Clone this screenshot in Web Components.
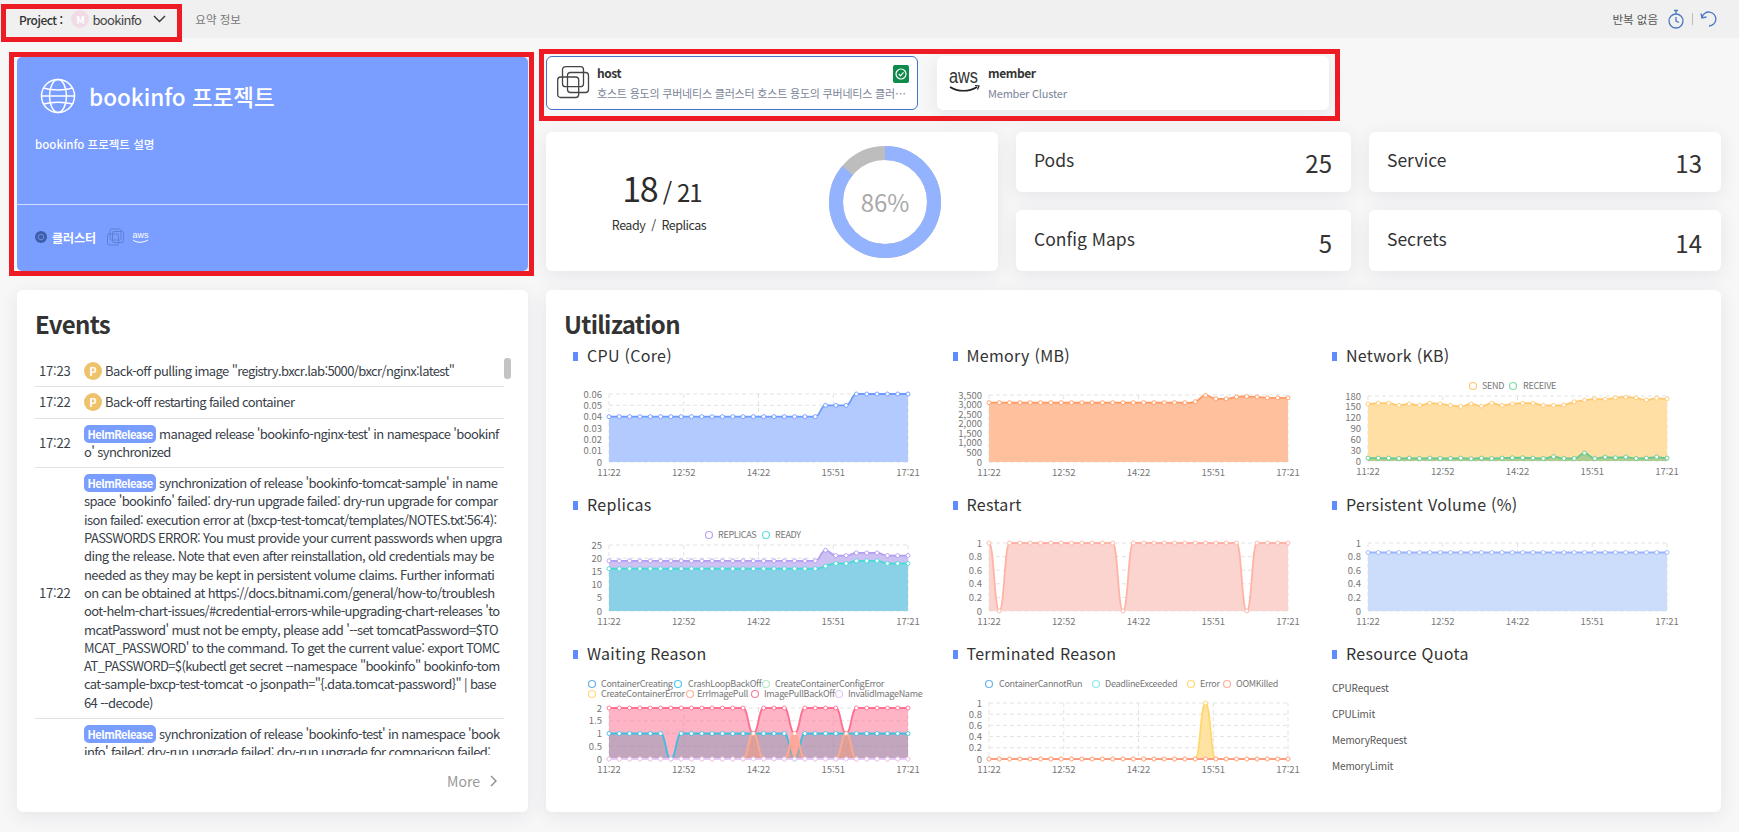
<!DOCTYPE html>
<html lang="ko">
<head>
<meta charset="utf-8">
<title>bookinfo</title>
<style>
    html, body { margin: 0; height: 832px; overflow: hidden; }
    body {
        position: relative;
        background: #f7f7f8;
        color: #333;
        font-family: "Noto Sans CJK KR", "Noto Sans", sans-serif;
    }
    main {
        display: grid;
        grid-template-columns: 511px 1175px;
        grid-template-rows: 216px 522px;
        gap: 18px;
        padding: 18px 18px 0 17px;
    }
    .right-top { display: flex; flex-direction: column; gap: 22px; }
    .clusters { display: flex; gap: 19px; }
    .stats {
        display: grid;
        grid-template-columns: 452px 335px 352px;
        grid-template-rows: 60px 61px;
        gap: 18px;
    }
    replica-card { grid-row: 1 / 3; }
</style>
</head>
<body>
<app-topbar></app-topbar>
<main>
    <project-hero name="bookinfo 프로젝트" desc="bookinfo 프로젝트 설명"></project-hero>
    <div class="right-top">
        <div class="clusters">
            <cluster-card style="width:372px" icon="stack" name="host" selected
                desc="호스트 용도의 쿠버네티스 클러스터 호스트 용도의 쿠버네티스 클러스터 호스트 용도의"></cluster-card>
            <cluster-card style="width:392px" icon="aws" name="member" desc="Member Cluster"></cluster-card>
        </div>
        <div class="stats">
            <replica-card ready="18" total="21" percent="86"></replica-card>
            <stat-card value="25">Pods</stat-card>
            <stat-card value="13">Service</stat-card>
            <stat-card value="5" low>Config Maps</stat-card>
            <stat-card value="14" low>Secrets</stat-card>
        </div>
    </div>
    <events-panel>
        <event-row time="17:23"><event-badge kind="p">P</event-badge> Back-off pulling image "registry.bxcr.lab:5000/bxcr/nginx:latest"</event-row>
        <event-row time="17:22"><event-badge kind="p">P</event-badge> Back-off restarting failed container</event-row>
        <event-row time="17:22"><event-badge kind="helm">HelmRelease</event-badge> managed release 'bookinfo-nginx-test' in namespace 'bookinf<br>o' synchronized</event-row>
        <event-row time="17:22"><event-badge kind="helm">HelmRelease</event-badge> synchronization of release 'bookinfo-tomcat-sample' in name<br>space 'bookinfo' failed: dry-run upgrade failed: dry-run upgrade for compar<br>ison failed: execution error at (bxcp-test-tomcat/templates/NOTES.txt:56:4):<br>PASSWORDS ERROR: You must provide your current passwords when upgra<br>ding the release. Note that even after reinstallation, old credentials may be<br>needed as they may be kept in persistent volume claims. Further informati<br>on can be obtained at https://docs.bitnami.com/general/how-to/troublesh<br>oot-helm-chart-issues/#credential-errors-while-upgrading-chart-releases 'to<br>mcatPassword' must not be empty, please add '--set tomcatPassword=$TO<br>MCAT_PASSWORD' to the command. To get the current value: export TOMC<br>AT_PASSWORD=$(kubectl get secret --namespace "bookinfo" bookinfo-tom<br>cat-sample-bxcp-test-tomcat -o jsonpath="{.data.tomcat-password}" | base<br>64 --decode)</event-row>
        <event-row time="17:22"><event-badge kind="helm">HelmRelease</event-badge> synchronization of release 'bookinfo-test' in namespace 'book<br>info' failed: dry-run upgrade failed: dry-run upgrade for comparison failed:<br>execution error at (bxcp-test/templates/NOTES.txt:56:4): PASSWORDS ERROR:<br>You must provide your current passwords when upgrading the release. Note<br>that even after reinstallation, old credentials may be needed as they may be<br>kept in persistent volume claims.</event-row>
    </events-panel>
    <utilization-panel>
        <metric-chart chart="cpu" heading="CPU (Core)"></metric-chart>
        <metric-chart chart="memory" heading="Memory (MB)"></metric-chart>
        <metric-chart chart="network" heading="Network (KB)"></metric-chart>
        <metric-chart chart="replicas" heading="Replicas"></metric-chart>
        <metric-chart chart="restart" heading="Restart"></metric-chart>
        <metric-chart chart="volume" heading="Persistent Volume (%)"></metric-chart>
        <metric-chart chart="waiting" heading="Waiting Reason"></metric-chart>
        <metric-chart chart="terminated" heading="Terminated Reason"></metric-chart>
        <quota-list heading="Resource Quota" items="CPURequest,CPULimit,MemoryRequest,MemoryLimit"></quota-list>
    </utilization-panel>
</main>
<mark-box style="left:1px;top:4px;width:181px;height:38px"></mark-box>
<mark-box style="left:9px;top:52px;width:525px;height:224px"></mark-box>
<mark-box style="left:539px;top:49px;width:801px;height:72px"></mark-box>

<script>
const CARD_CSS = `
    background: #fff;
    border-radius: 6px;
    box-shadow: 0 4px 18px rgba(40, 50, 70, .09);
`;

// simple base class, every element renders its markup once
class ShadowEl extends HTMLElement {
    constructor() {
        super();
        this.attachShadow({ mode: 'open' });
    }
    connectedCallback() {
        this.shadowRoot.innerHTML = this.template();
    }
}

class MarkBox extends ShadowEl {
    template() {
        return `<style>
            :host { display: block; position: absolute; box-sizing: border-box; border: 5px solid #ed1c24; pointer-events: none; }
        </style>`;
    }
}

class AppTopbar extends ShadowEl {
    template() {
        return `<style>
            :host { display: flex; align-items: center; height: 38px; background: #f0f0f0; padding: 0 21px 0 19px; font-size: 12px; }
            .label { font-weight: 500; color: #333; margin-right: 9px; letter-spacing: -.5px; white-space: nowrap; }
            .avatar { width: 18px; height: 18px; border-radius: 50%; background: #f0dbe6; color: #fff; font-weight: 700; font-size: 10px;
                display: flex; align-items: center; justify-content: center; margin-right: 3px; }
            .name { font-size: 13px; color: #444; letter-spacing: -.7px; }
            .chev { margin-left: 12px; }
            .sep { width: 1px; height: 12px; background: #ccc; margin: 0 14px 0 14px; }
            .tab { color: #777; font-size: 11.500px; }
            .grow { flex: 1; }
            .repeat { color: #555; font-size: 11.500px; margin-right: 10px; }
            .sep2 { width: 1px; height: 12px; background: #bbb; margin: 0 7px 0 8px; }
            svg { display: block; }
        </style>
        <span class="label">Project :</span>
        <span class="avatar">M</span>
        <span class="name">bookinfo</span>
        <svg class="chev" width="13" height="8" viewBox="0 0 13 8" fill="none" stroke="#333" stroke-width="1.4"><path d="M1 1l5.5 5.5L12 1"/></svg>
        <span class="sep"></span>
        <span class="tab">요약 정보</span>
        <span class="grow"></span>
        <span class="repeat">반복 없음</span>
        <svg width="16" height="20" viewBox="0 0 16 20" fill="none" stroke="#4a78c2" stroke-width="1.3">
            <circle cx="8" cy="12" r="7"/><path d="M6 1.5h4M8 2v3M8 8v4l3 1.5"/>
        </svg>
        <span class="sep2"></span>
        <svg width="18" height="16" viewBox="0 0 18 16" fill="none" stroke="#4a78c2" stroke-width="1.3">
            <path d="M2 6.5A7 7 0 1 1 9 15"/><path d="M1 2.5l1 4.5 4.500-1"/>
        </svg>`;
    }
}

class ProjectHero extends ShadowEl {
    template() {
        return `<style>
            :host { display: flex; flex-direction: column; box-sizing: border-box; height: 214px; margin-top: 1px; background: #7a9eff;
                border-radius: 5px; color: #fff; }
            .top { height: 148px; box-sizing: border-box; border-bottom: 1px solid rgba(255,255,255,.65); padding: 21px 18px 0; }
            .title { display: flex; align-items: center; gap: 13px; margin-left: 5px; }
            h1 { margin: 0; font-size: 22.500px; font-weight: 500; line-height: 36px; }
            p { margin: 21px 0 0; font-size: 11.500px; font-weight: 500; line-height: 18px; }
            .bottom { display: flex; align-items: center; padding: 23px 18px 0; }
            .bottom b { font-size: 12px; font-weight: 700; margin: 0 11px 0 5px; }
            svg { display: block; flex: none; }
        </style>
        <div class="top">
            <div class="title">
                <svg width="36" height="36" viewBox="0 0 36 36" fill="none" stroke="#fff" stroke-width="1.5">
                    <circle cx="18" cy="18" r="16.500"/><ellipse cx="18" cy="18" rx="8.500" ry="16.500"/>
                    <path d="M3.500 10c8 2.500 21 2.500 29 0M3.500 26c8-2.500 21-2.500 29 0M1.500 18h33"/>
                </svg>
                <h1>${this.getAttribute('name')}</h1>
            </div>
            <p>${this.getAttribute('desc')}</p>
        </div>
        <div class="bottom">
            <svg width="12" height="12" viewBox="0 0 12 12"><circle cx="6" cy="6" r="6" fill="#3d5fa6"/><circle cx="6" cy="6" r="2.800" fill="none" stroke="#6d8fe6" stroke-width="1"/></svg>
            <b>클러스터</b>
            <svg width="17" height="18" viewBox="0 0 17 18" fill="none" stroke="#5f80d6" stroke-width="1">
                <rect x="3" y="1" width="11" height="11" rx="1.500"/><rect x="5.500" y="3.500" width="11" height="11" rx="1.500"/><rect x=".5" y="6" width="11" height="11" rx="1.500"/>
            </svg>
            <svg style="margin-left:8px" width="17" height="14" viewBox="0 0 17 14" fill="none">
                <text x="8.500" y="8" text-anchor="middle" font-size="9" fill="#fff" font-family="Liberation Sans, sans-serif">aws</text>
                <path d="M1 10c4 3 10 3 15 0" stroke="#fff" stroke-width="1"/>
            </svg>
        </div>`;
    }
}

class ClusterCard extends ShadowEl {
    template() {
        const selected = this.hasAttribute('selected');
        const icon = this.getAttribute('icon') === 'stack' ? `
            <svg width="33" height="33" viewBox="0 0 33 33" fill="none" stroke="#444" stroke-width="1.300">
                <rect x="5.500" y=".7" width="21" height="20" rx="3"/><rect x="10.500" y="6.500" width="21" height="20" rx="3"/><rect x=".7" y="11" width="21" height="20.500" rx="3"/>
            </svg>` : `
            <svg width="33" height="33" viewBox="0 0 33 33" fill="none">
                <text x="1" y="18" font-size="20" fill="#333" font-family="Liberation Sans, sans-serif" textLength="29" lengthAdjust="spacingAndGlyphs">aws</text>
                <path d="M2 22c8 5 19 5 27 0" stroke="#222" stroke-width="1.600"/><path d="M27 20.500l4 .500-1.500 3.500" stroke="#222" stroke-width="1.200"/>
            </svg>`;
        return `<style>
            :host { display: flex; box-sizing: border-box; height: 54px; position: relative; ${CARD_CSS}
                padding: 9px 9px 0 ${selected ? 10 : 11}px; gap: 7px; ${selected ? 'border: 1px solid #4472c4; box-shadow: none;' : ''} }
            svg { flex: none; }
            .text { min-width: 0; flex: 1; margin-top: ${selected ? -1 : 0}px; }
            .name { font-size: 12px; font-weight: 700; color: #333; line-height: 16px; letter-spacing: -.4px; }
            .desc { font-size: 11px; letter-spacing: -.2px; color: #7b8598; line-height: 16px; margin-top: 4px; white-space: nowrap; overflow: hidden; text-overflow: ellipsis; }
            .check { position: absolute; top: 8px; right: 8px; }
        </style>
        ${icon}
        <div class="text">
            <div class="name">${this.getAttribute('name')}</div>
            <div class="desc">${this.getAttribute('desc')}</div>
        </div>
        ${selected ? `<svg class="check" width="16" height="18" viewBox="0 0 16 18">
            <rect width="16" height="18" rx="2" fill="#0e8a4a"/><circle cx="8" cy="9" r="5" fill="none" stroke="#fff" stroke-width="1.200"/>
            <path d="M5.800 9l1.700 1.800 3-3.500" fill="none" stroke="#fff" stroke-width="1.200"/></svg>` : ''}`;
    }
}

class ReplicaCard extends ShadowEl {
    template() {
        const pct = Number(this.getAttribute('percent'));
        const r = 49;
        const circ = 2 * Math.PI * r;
        return `<style>
            :host { display: flex; align-items: center; ${CARD_CSS} }
            .nums { width: 232px; flex: none; align-self: flex-start; padding-top: 35px; text-align: center; }
            .count { line-height: 42px; color: #2c2c2c; }
            .count b { font-size: 34px; font-weight: 400; letter-spacing: -1.500px; }
            .count span { font-size: 24px; letter-spacing: -1px; }
            .label { font-size: 12.500px; letter-spacing: -.5px; color: #333; line-height: 18px; padding-right: 6px; }
            .donut { position: relative; width: 112px; height: 112px; margin-left: 51px; }
            .donut span { position: absolute; inset: 0; display: flex; align-items: center; justify-content: center; font-size: 24px; color: #a9a9a9; }
            svg { display: block; transform: rotate(-90deg); }
        </style>
        <div class="nums">
            <div class="count"><b>${this.getAttribute('ready')}</b><span> / ${this.getAttribute('total')}</span></div>
            <div class="label">Ready&nbsp; /&nbsp; Replicas</div>
        </div>
        <div class="donut">
            <svg width="112" height="112" viewBox="0 0 112 112" fill="none" stroke-width="14">
                <circle cx="56" cy="56" r="${r}" stroke="#bdbdbd"/>
                <circle cx="56" cy="56" r="${r}" stroke="#94b3ff" stroke-dasharray="${circ * pct / 100} ${circ}"/>
            </svg>
            <span>${pct}%</span>
        </div>`;
    }
}

class StatCard extends ShadowEl {
    template() {
        const low = this.hasAttribute('low');
        return `<style>
            :host { display: flex; justify-content: space-between; box-sizing: border-box; ${CARD_CSS} padding: ${low ? 16 : 15}px 19px 0 18px; color: #333; }
            .label { font-size: 17.500px; line-height: 26px; }
            .value { font-size: 24px; line-height: 30px; margin-top: ${low ? 2 : 1}px; }
        </style>
        <span class="label"><slot></slot></span>
        <span class="value">${this.getAttribute('value')}</span>`;
    }
}

class EventsPanel extends ShadowEl {
    template() {
        return `<style>
            :host { display: flex; flex-direction: column; position: relative; box-sizing: border-box; ${CARD_CSS} padding: 17px 17px 0 18px; }
            h2 { margin: 0 0 15px; font-size: 24px; line-height: 34px; font-weight: 700; color: #333; letter-spacing: -.7px; }
            .list { height: 399px; overflow: hidden; margin-right: 7px; }
            .thumb { position: absolute; left: 487px; top: 68px; width: 7px; height: 21px; background: #c4c4c4; border-radius: 3px; }
            .more { display: flex; align-items: center; justify-content: flex-end; gap: 10px; margin-top: 16px; padding-right: 14px; font-size: 14px; line-height: 20px; color: #999; }
        </style>
        <h2>Events</h2>
        <div class="list"><slot></slot></div>
        <div class="thumb"></div>
        <div class="more">More
            <svg width="7" height="12" viewBox="0 0 7 12" fill="none" stroke="#888" stroke-width="1.300"><path d="M1 1l5 5-5 5"/></svg>
        </div>`;
    }
}

class EventRow extends ShadowEl {
    template() {
        return `<style>
            :host { display: grid; grid-template-columns: 49px 420px; align-items: center; box-sizing: border-box; padding: 6px 0;
                border-bottom: 1px solid #e2e2e2; font-size: 13px; letter-spacing: -.62px; line-height: 18.300px; color: #3a3f4a; }
            .time { padding-left: 4px; color: #3a3f4a; letter-spacing: -.2px; }
            .msg { white-space: nowrap; }
        </style>
        <div class="time">${this.getAttribute('time')}</div>
        <div class="msg"><slot></slot></div>`;
    }
}

class EventBadge extends ShadowEl {
    template() {
        const helm = this.getAttribute('kind') === 'helm';
        return `<style>
            :host { display: inline-block; vertical-align: top; box-sizing: border-box; height: 18px; color: #fff; font-weight: 700; text-align: center;
                font-size: 11px; letter-spacing: ${helm ? '-.5px' : '0'}; line-height: 18px; white-space: nowrap;
                background: ${helm ? '#7a9eff' : '#eec26a'}; border-radius: ${helm ? '5px' : '50%'}; width: ${helm ? 72 : 18}px; }
        </style><slot></slot>`;
    }
}

class UtilizationPanel extends ShadowEl {
    template() {
        return `<style>
            :host { display: block; box-sizing: border-box; ${CARD_CSS} padding: 17px 0 0 18px; }
            h2 { margin: 0 0 4px; font-size: 24px; line-height: 34px; font-weight: 700; color: #333; letter-spacing: -.7px; }
            .grid { display: grid; grid-template-columns: repeat(3, 379.500px); grid-auto-rows: 149px; margin-left: 9px; }
        </style>
        <h2>Utilization</h2>
        <div class="grid"><slot></slot></div>`;
    }
}

const HEADING_CSS = `
    .heading { display: flex; align-items: center; height: 22px; font-size: 16px; color: #333; letter-spacing: .3px; }
    .heading i { width: 5px; height: 9px; background: #5f8bff; margin-right: 9px; }
    .heading span { padding-bottom: 2px; }
`;

// series: [name, values, line colour, fill colour]
const flat = (v, over = {}) => Array.from({ length: 30 }, (_, i) => (i in over ? over[i] : v));

const CHARTS = {
    cpu: {
        top: 27, bottom: 95, ticks: ['0', '0.01', '0.02', '0.03', '0.04', '0.05', '0.06'], max: 0.06,
        series: [['cpu', flat(0.04, { 21: 0.05, 22: 0.05, 23: 0.05, 24: 0.06, 25: 0.06, 26: 0.06, 27: 0.06, 28: 0.06, 29: 0.06 }), '#6f9bff', '#b3caff']],
    },
    memory: {
        top: 28, bottom: 95, ticks: ['0', '500', '1,000', '1,500', '2,000', '2,500', '3,000', '3,500'], max: 3500,
        series: [['mem', flat(3100, { 20: 3150, 21: 3480, 22: 3300, 23: 3300, 24: 3400, 25: 3420, 26: 3400, 27: 3350, 28: 3350, 29: 3350 }), '#ff9a62', '#ffc09e']],
    },
    network: {
        top: 29, bottom: 94, ticks: ['0', '30', '60', '90', '120', '150', '180'], max: 180,
        legend: [[141, 19, 150, 'SEND', '#ffc870'], [181, 19, 191, 'RECEIVE', '#7fdca5']],
        series: [
            ['send', [158, 160, 160, 154, 158, 154, 160, 158, 154, 151, 158, 152, 160, 154, 158, 160, 160, 154, 154, 155, 164, 168, 172, 171, 175, 177, 175, 169, 174, 172], '#ffc870', '#ffdfa3'],
            ['receive', [8, 8, 8, 7, 8, 7, 8, 7, 7, 8, 6, 8, 7, 8, 9, 9, 8, 7, 12, 7, 7, 22, 7, 11, 9, 11, 7, 8, 11, 8], '#62c98e', 'rgba(110,190,130,.55)'],
        ],
    },
    replicas: {
        top: 29, bottom: 95, ticks: ['0', '5', '10', '15', '20', '25'], max: 25,
        legend: [[136, 19, 145, 'REPLICAS', '#b9a5f2'], [193, 19, 202, 'READY', '#5fe0dc']],
        series: [
            ['replicas', flat(19, { 21: 23, 22: 21, 23: 21, 24: 22, 25: 22, 26: 22, 27: 21, 28: 21, 29: 21 }), '#b39df0', '#cdc0f2'],
            ['ready', flat(16, { 21: 17, 22: 18, 23: 18, 24: 19, 25: 19, 26: 19, 27: 18, 28: 18, 29: 18 }), '#4cd8d8', '#8ad0e6'],
        ],
    },
    restart: {
        top: 27, bottom: 95, ticks: ['0', '0.2', '0.4', '0.6', '0.8', '1'], max: 1,
        series: [['restart', flat(1, { 1: 0, 13: 0, 25: 0 }), '#ffb3a6', '#fcd4cf']],
    },
    volume: {
        top: 27, bottom: 95, ticks: ['0', '0.2', '0.4', '0.6', '0.8', '1'], max: 1,
        series: [['pv', flat(0.86), '#9ab4fb', '#ccdcfb']],
    },
    waiting: {
        top: 43, bottom: 94, ticks: ['0', '0.5', '1', '1.5', '2'], max: 2,
        legend: [
            [19, 19, 28, 'ContainerCreating', '#6bb2e8'], [105, 19, 115, 'CrashLoopBackOff', '#52c8ea'], [193, 19, 202, 'CreateContainerConfigError', '#b5e8c8'],
            [19, 29, 28, 'CreateContainerError', '#ffd97a'], [117, 29, 124, 'ErrImagePull', '#ffb199'], [182, 29, 191, 'ImagePullBackOff', '#ff7f9c'], [266, 29, 275, 'InvalidImageName', '#e8c8f5'],
        ],
        series: [
            ['pull', flat(2, { 14: 1, 18: 1, 23: 1 }), '#ff6f91', 'rgba(255,111,145,.52)'],
            ['crash', flat(1, { 6: 0, 18: 0 }), '#3dbfe0', 'rgba(70,140,170,.33)'],
            ['err', flat(0, { 14: 1, 18: 1, 23: 1 }), '#ffa98f', 'rgba(255,150,110,.45)'],
            ['invalid', flat(0), '#e8c8f5', 'none'],
        ],
    },
    terminated: {
        top: 38, bottom: 94, ticks: ['0', '0.2', '0.4', '0.6', '0.8', '1'], max: 1,
        legend: [
            [36, 19, 46, 'ContainerCannotRun', '#6bb2e8'], [143, 19, 152, 'DeadlineExceeded', '#8fe8ee'],
            [238, 19, 247, 'Error', '#ffd97a'], [274, 19, 283, 'OOMKilled', '#ffb199'],
        ],
        series: [
            ['error', flat(0, { 21: 1 }), '#ffd76e', '#ffe3a3'],
            ['oom', flat(0), '#ff9d80', 'none'],
        ],
    },
};

const LEFT = 36;
const RIGHT = 335;
const X_LABELS = ['11:22', '12:52', '14:22', '15:51', '17:21'];

function smoothPath(pts) {
    const slopes = pts.map((p, i) => {
        if (i === 0 || i === pts.length - 1) return 0;
        const a = p[1] - pts[i - 1][1];
        const b = pts[i + 1][1] - p[1];
        if (a * b <= 0) return 0;
        return (a + b) / 2;
    });
    let d = `M${pts[0][0]} ${pts[0][1]}`;
    for (let i = 1; i < pts.length; i++) {
        const dx = (pts[i][0] - pts[i - 1][0]) / 2;
        d += `C${pts[i - 1][0] + dx} ${pts[i - 1][1] + slopes[i - 1] / 2} ${pts[i][0] - dx} ${pts[i][1] - slopes[i] / 2} ${pts[i][0]} ${pts[i][1]}`;
    }
    return d;
}

class MetricChart extends ShadowEl {
    template() {
        const cfg = CHARTS[this.getAttribute('chart')];
        const { top, bottom, ticks, max } = cfg;
        const step = (RIGHT - LEFT) / 29;
        let grid = '';
        let labels = '';
        ticks.forEach((t, i) => {
            const y = bottom - (bottom - top) * i / (ticks.length - 1);
            grid += `<line x1="${LEFT}" x2="${RIGHT}" y1="${y}" y2="${y}"/>`;
            labels += `<text class="y" x="${LEFT - 7}" y="${y + 3.5}">${t}</text>`;
        });
        X_LABELS.forEach((t, i) => {
            const x = LEFT + (RIGHT - LEFT) * i / 4;
            grid += `<line x1="${x}" x2="${x}" y1="${top}" y2="${bottom}"/>`;
            labels += `<text class="x" x="${x}" y="${bottom + 14}">${t}</text>`;
        });
        let lines = '';
        for (const [, values, color, fill] of cfg.series) {
            const pts = values.map((v, i) => [+(LEFT + i * step).toFixed(2), +(bottom - (bottom - top) * v / max).toFixed(2)]);
            const line = smoothPath(pts);
            if (fill !== 'none') {
                lines += `<path d="${line}L${RIGHT} ${bottom}L${LEFT} ${bottom}Z" fill="${fill}"/>`;
            }
            lines += `<path d="${line}" fill="none" stroke="${color}" stroke-width="1.800"/>`;
            lines += pts.map(p => `<circle cx="${p[0]}" cy="${p[1]}" r="2" fill="#fff" stroke="${color}" stroke-width=".9"/>`).join('');
        }
        const legend = (cfg.legend || []).map(([cx, y, tx, name, color]) =>
            `<circle cx="${cx}" cy="${y}" r="3.500" fill="#fff" stroke="${color}" stroke-width="1.200"/><text class="lg" x="${tx}" y="${y + 3}">${name}</text>`).join('');
        return `<style>
            :host { display: block; }
            ${HEADING_CSS}
            svg { display: block; font-family: "Noto Sans CJK KR", "Noto Sans", sans-serif; }
            .gridlines line { stroke: #e3e3e3; stroke-dasharray: 4 3; stroke-width: 1; }
            text { fill: #777; font-size: 9.500px; }
            .y { text-anchor: end; }
            .x { text-anchor: middle; }
            .lg { font-size: 9px; letter-spacing: -.3px; }
        </style>
        <div class="heading"><i></i><span>${this.getAttribute('heading')}</span></div>
        <svg width="379" height="127" viewBox="0 0 379 127">
            <g class="gridlines">${grid}</g>
            ${lines}
            ${labels}
            ${legend}
        </svg>`;
    }
}

class QuotaList extends ShadowEl {
    template() {
        const rows = this.getAttribute('items').split(',').map(t => `<li>${t}</li>`).join('');
        return `<style>
            :host { display: block; }
            ${HEADING_CSS}
            ul { list-style: none; margin: 10px 0 0 0; padding: 0; }
            li { font-size: 10px; line-height: 26px; color: #555; letter-spacing: -.1px; }
        </style>
        <div class="heading"><i></i><span>${this.getAttribute('heading')}</span></div>
        <ul>${rows}</ul>`;
    }
}

customElements.define('mark-box', MarkBox);
customElements.define('app-topbar', AppTopbar);
customElements.define('project-hero', ProjectHero);
customElements.define('cluster-card', ClusterCard);
customElements.define('replica-card', ReplicaCard);
customElements.define('stat-card', StatCard);
customElements.define('events-panel', EventsPanel);
customElements.define('event-row', EventRow);
customElements.define('event-badge', EventBadge);
customElements.define('utilization-panel', UtilizationPanel);
customElements.define('metric-chart', MetricChart);
customElements.define('quota-list', QuotaList);
</script>
</body>
</html>
